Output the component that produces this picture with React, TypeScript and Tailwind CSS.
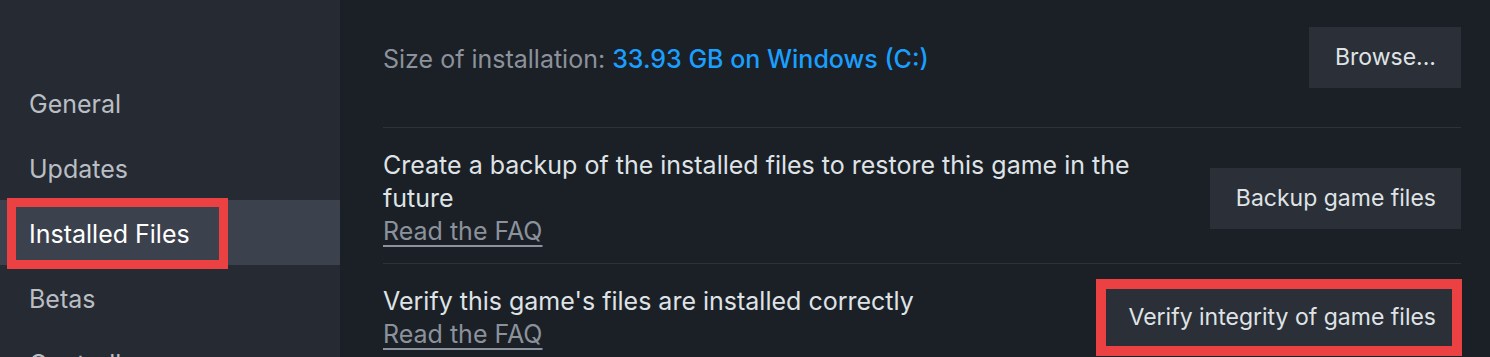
import React from 'react';

const NAV_ITEMS = ['General', 'Updates', 'Installed Files', 'Betas', 'Controller'];

const font = { fontFamily: 'Inter, "Noto Sans", sans-serif' };

const SideNav: React.FC = () => (
  <nav className="w-[340px] shrink-0 bg-[#262a32] pt-[70px]">
    {NAV_ITEMS.map((item) => {
      const active = item === 'Installed Files';
      return (
        <div
          key={item}
          className={`relative flex h-[65px] items-center pl-[29px] pt-[4px] text-[25px] ${
            active ? 'bg-[#3c424d] text-white' : 'text-[#b9bec4]'
          }`}
        >
          {item}
          {active && (
            // annotation box drawn over the selected row
            <div className="absolute left-[7px] top-[-2px] h-[71px] w-[221px] border-[9px] border-[#ec4142]" />
          )}
        </div>
      );
    })}
  </nav>
);

const Button: React.FC<{ children: React.ReactNode; highlight?: boolean }> = ({ children, highlight }) => (
  <div className="relative shrink-0">
    <button className="h-[61px] bg-[#2b2f37] pl-[26px] pr-[25px] text-[23px] text-[#dfe3e6]">{children}</button>
    {highlight && (
      <div className="absolute top-[-8px] bottom-[-8px] left-[-6px] right-[-1px] border-[10px] border-[#ec4142]" />
    )}
  </div>
);

const FaqLink: React.FC = () => (
  <a className="text-[#8b929b] underline decoration-[2px] underline-offset-[5px]">Read the FAQ</a>
);

const App: React.FC = () => {
  return (
    <div className="flex h-[357px] w-[1490px] overflow-hidden bg-[#1b1f26]" style={font}>
      <SideNav />
      <main className="flex-1 pl-[43px] pr-[29px]">
        {/* install size */}
        <div className="flex items-center justify-between border-b border-[#2c313a] pt-[27px] pb-[39px]">
          <div className="pt-[4px] text-[25px] text-[#8b929b]">
            Size of installation: <span className="font-medium text-[#1a9fff]">33.93 GB on Windows (C:)</span>
          </div>
          <Button>Browse...</Button>
        </div>

        {/* backup */}
        <div className="flex items-center justify-between border-b border-[#2c313a] pt-[21px] pb-[15px]">
          <div className="w-[770px] text-[25px] leading-[33px] text-[#dfe3e6]">
            <p>Create a backup of the installed files to restore this game in the future</p>
            <FaqLink />
          </div>
          <Button>Backup game files</Button>
        </div>

        {/* verify */}
        <div className="flex items-center justify-between pt-[19px] pb-[19px]">
          <div className="pt-[2px] text-[25px] leading-[33px] text-[#dfe3e6]">
            <p>Verify this game's files are installed correctly</p>
            <FaqLink />
          </div>
          <Button highlight>Verify integrity of game files</Button>
        </div>
      </main>
    </div>
  );
};

export default App;
